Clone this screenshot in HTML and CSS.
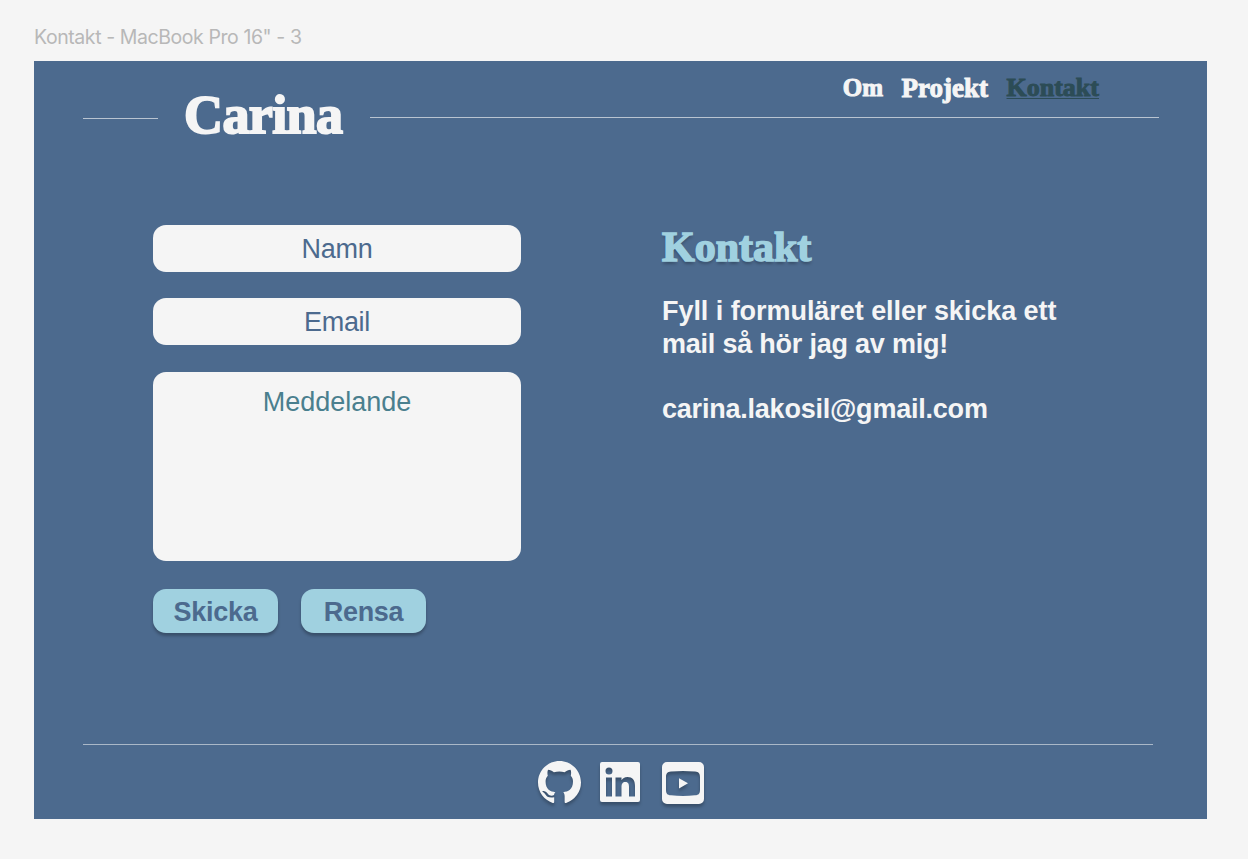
FILE: index.html
```html
<!DOCTYPE html>
<html lang="sv">
<head>
<meta charset="utf-8">
<title>Kontakt</title>
<link rel="stylesheet" href="styles.css">
</head>
<body>
<div class="frame-name">Kontakt - MacBook Pro 16" - 3</div>
<div class="page">
  <header class="header">
    <span class="rule rule-left"></span>
    <h1 class="brand">Carina</h1>
    <div class="header-main">
      <nav class="nav">
        <a class="nav-om">Om</a>
        <a class="nav-projekt">Projekt</a>
        <a class="nav-kontakt">Kontakt</a>
      </nav>
      <span class="rule rule-right"></span>
    </div>
  </header>
  <main class="main">
    <form class="form">
      <div class="field">Namn</div>
      <div class="field">Email</div>
      <div class="field message">Meddelande</div>
      <div class="buttons">
        <button type="button" class="button">Skicka</button>
        <button type="button" class="button">Rensa</button>
      </div>
    </form>
    <section class="info">
      <h2 class="title">Kontakt</h2>
      <p class="copy">Fyll i formuläret eller skicka ett<br><span class="tight">mail så hör jag av mig!</span></p>
      <p class="copy tight">carina.lakosil@gmail.com</p>
    </section>
  </main>
  <footer class="footer">
    <svg class="icon github" viewBox="0 0 16 16"><path d="M8 0C3.580 0 0 3.580 0 8c0 3.540 2.290 6.530 5.470 7.590.4.070.55-.17.55-.38V13.500c-2.010.37-2.830-.3-3.190-.94-.3-.5-.7-.85-1.120-1.100-.2-.2 0-.4.400-.3.9.1 1.300.7 1.700 1.200.6.7 1.500.6 2.140.3.070-.52.280-.87.510-1.070C4.680 11.390 2.820 10.700 2.820 7.640c0-.87.310-1.590.82-2.150-.18-.7-.2-1.500.08-2.220.8 0 1.500.4 2.200.92.640-.18 1.320-.27 2-.27s1.360.09 2 .27c.7-.52 1.400-.92 2.200-.92.280.72.260 1.520.08 2.220.51.56.82 1.270.82 2.150 0 3.070-1.870 3.750-3.650 3.950.29.250.54.730.54 1.480v2.140c0 .21.150.46.55.38A8.010 8.010 0 0 0 16 8c0-4.420-3.580-8-8-8z"/></svg>
    <svg class="icon linkedin" viewBox="0 0 40 40"><path fill-rule="evenodd" d="M2 0H38a2 2 0 0 1 2 2V38a2 2 0 0 1-2 2H2a2 2 0 0 1-2-2V2a2 2 0 0 1 2-2ZM6 15.500V34.500H12V15.500ZM9 5.500a3.500 3.500 0 1 0 0 7 3.500 3.500 0 0 0 0-7ZM15.500 15.500V34.500H21.500V25c0-3 1-5 4-5s3.500 2.500 3.500 5V34.500H35V24c0-6-2.500-9-7.500-9-3 0-5 1.500-6 3.200V15.500Z"/></svg>
    <svg class="icon youtube" viewBox="0 0 42 42"><path fill-rule="evenodd" d="M5 0H37a5 5 0 0 1 5 5V37a5 5 0 0 1-5 5H5a5 5 0 0 1-5-5V5a5 5 0 0 1 5-5ZM9 9.500C5 10 4 11.500 4 15.500V27.500C4 31.500 5 33 9 33.300Q21 34.500 33 33.300C37 33 38 31.500 38 27.500V15.500C38 11.500 37 10 33 9.500Q21 8.500 9 9.500ZM17 16.300L26 21.300L17 26.500Z"/></svg>
  </footer>
</div>
</body>
</html>
```
FILE: styles.css
```css
* { box-sizing: border-box; }
body {
  margin: 0;
  padding: 24px 41px 40px 34px;
  background: #f5f5f5;
  font-family: "Liberation Sans", Arial, sans-serif;
}
h1, h2, p { margin: 0; }
.frame-name {
  height: 37px;
  font: 19.500px/26px Inter, sans-serif;
  letter-spacing: -0.420px;
  color: #b8b8b8;
}
.page {
  width: 1173px;
  height: 758px;
  background: #4c6a8e;
  display: flex;
  flex-direction: column;
}
.header {
  display: flex;
  height: 163.500px;
  padding: 0 48px 0 49px;
}
.rule { display: block; height: 1px; background: #b9c4d1; }
.rule-left { width: 75px; margin-top: 57px; }
.brand, .nav, .title {
  font-family: "Liberation Serif", "Times New Roman", serif;
  font-weight: 700;
  white-space: nowrap;
}
.brand {
  width: 162px;
  margin: 21px 24px 0 26px;
  font-size: 54px;
  line-height: 66px;
  letter-spacing: -0.600px;
  color: #f5f5f5;
  -webkit-text-stroke: 2px #f5f5f5;
}
.header-main { flex: 1; }
.nav {
  display: flex;
  height: 56px;
  padding: 12px 60px 0 0;
  justify-content: flex-end;
  gap: 18.500px;
  line-height: 30px;
  font-size: 26px;
  color: #f5f5f5;
  -webkit-text-stroke: 1px currentColor;
}
.nav-om { font-size: 25px; }
.nav-projekt { font-size: 27px; }
.nav-kontakt {
  color: #2c4c56;
  text-decoration: underline;
  text-decoration-thickness: 1px;
  text-underline-offset: 2px;
}
.main {
  display: flex;
  flex: 1;
  padding-left: 119px;
}
.form {
  width: 368px;
  display: flex;
  flex-direction: column;
  gap: 26.500px;
}
.field {
  height: 47px;
  border-radius: 13px;
  background: #f5f5f5;
  color: #4c6a8e;
  text-align: center;
  font-size: 27px;
  letter-spacing: -0.300px;
  line-height: 49px;
}
.message { height: 189px; letter-spacing: 0; line-height: 61px; color: #4a7f8e; }
.buttons { display: flex; gap: 23px; padding-top: 2px; }
.button {
  width: 125px;
  height: 44px;
  padding: 2px 0 0;
  border: 0;
  border-radius: 13px;
  background: #a0d1e0;
  color: #4c6a8e;
  font: 700 27px/40px "Liberation Sans", Arial, sans-serif;
  letter-spacing: -0.300px;
  box-shadow: 0 3px 3px rgba(0, 0, 0, 0.25);
}
.info { padding-left: 141px; }
.title {
  height: 70.500px;
  font-size: 42px;
  line-height: 45px;
  color: #a0d1e0;
  -webkit-text-stroke: 1.600px #a0d1e0;
  text-shadow: 0 3px 3px rgba(0, 0, 0, 0.25);
}
.copy {
  margin-bottom: 32.500px;
  color: #f5f5f5;
  font-size: 27px;
  font-weight: 700;
  line-height: 32.600px;
  letter-spacing: -0.050px;
  white-space: nowrap;
}
.tight { letter-spacing: -0.220px; }
.footer {
  height: 75px;
  margin: 0 54px 0 49px;
  padding: 17px 0 0 455px;
  border-top: 1px solid #aab8c8;
  display: flex;
  align-items: flex-start;
}
.icon {
  fill: #f5f5f5;
  overflow: visible;
  filter: drop-shadow(0 3px 1.500px rgba(0, 0, 0, 0.25));
}
.github { width: 43px; height: 43px; margin-top: -1px; }
.linkedin { width: 40px; height: 40px; margin: 0 22px 0 19px; }
.youtube { width: 42px; height: 42px; }
```
